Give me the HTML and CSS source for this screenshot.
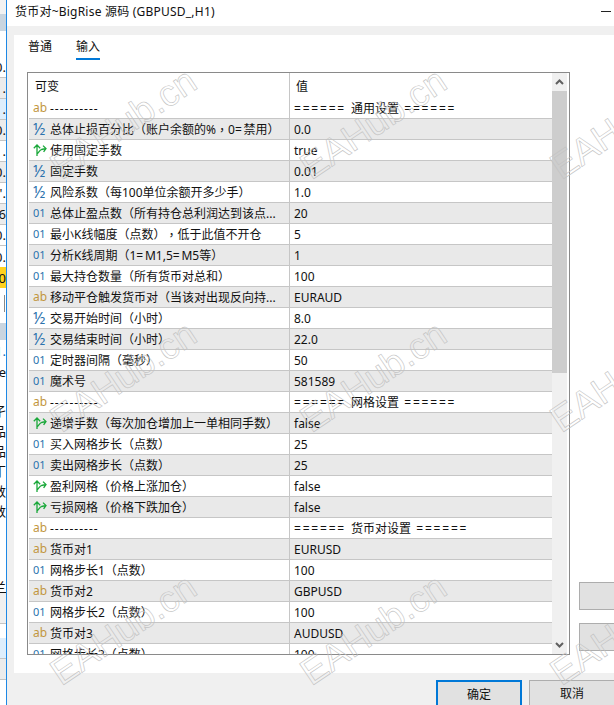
FILE: index.html
```html
<!DOCTYPE html>
<html lang="en">
  <head>
    <meta charset="UTF-8" />
    <title>货币对~BigRise 源码 (GBPUSD_,H1)</title>
    <link rel="stylesheet" href="styles.css">
  </head>
  <body>
    <svg class="icon-defs" width="0" height="0">
      <symbol id="boolIcon" viewBox="0 0 14 12">
        <path d="M4 12V1M.8 4.2 4 1 7.2 4.2M4.5 9.5C6 8 6.8 6 8.5 5.5L13 4.5M10 1.6 13 4.5 10.6 7.8" fill="none" stroke="#1aa83a" stroke-width="1.3" />
      </symbol>
    </svg>

    <div class="window">
      <!-- the window behind the dialog, only its right edge shows -->
      <div class="behind">
        <div class="bh h14 pale"></div>
        <div class="bh h17 steel"></div>
        <div class="bh h26"></div>
        <div class="bh h21 ruled">0.</div>
        <div class="bh h21 grey ruled">.</div>
        <div class="bh h21 sky ruled">.</div>
        <div class="bh h21 grey ruled">0.</div>
        <div class="bh h21 ruled">.</div>
        <div class="bh h21 grey ruled">0.</div>
        <div class="bh h21 ruled">'.</div>
        <div class="bh h21 grey ruled">6</div>
        <div class="bh h21 ruled">0.</div>
        <div class="bh h21">0.</div>
        <div class="bh h21 amber">40</div>
        <div class="bh h7"></div>
        <div class="bh h17"><span class="bh-bar"></span></div>
        <div class="bh h11"></div>
        <div class="bh h17 steel"></div>
        <div class="bh h21 link">1.</div>
        <div class="bh h21">e</div>
        <div class="bh h18"></div>
        <div class="bh h20">孑</div>
        <div class="bh h20">品</div>
        <div class="bh h20">品</div>
        <div class="bh h20">丁</div>
        <div class="bh h20">数</div>
        <div class="bh h20">数</div>
        <div class="bh h61"></div>
        <div class="bh h12 underlined">兰</div>
        <div class="bh h31 shade ruled"></div>
        <div class="bh h14"></div>
        <div class="bh h21 sky ruled"></div>
        <div class="bh h21 grey ruled"></div>
        <div class="bh h25"></div>
      </div>

      <div class="dialog">
        <div class="titlebar">
          <span class="title">货币对~BigRise 源码 (GBPUSD_,H1)</span>
          <span class="minimize"></span>
        </div>

        <div class="dialog-body">
          <div class="page">
            <div class="tabs">
              <span class="tab">普通</span>
              <span class="tab active">输入</span>
            </div>

            <div class="page-main">
              <div class="param-box">
                <div class="param-list">
                  <table class="params">
                    <thead>
                      <tr><th class="col-name">可变</th><th class="col-value">值</th></tr>
                    </thead>
                    <tbody>
                      <tr><td class="col-name"><span class="ico ab">ab</span><span class="dashes">----------</span></td><td class="col-value"><span class="eq">======</span> 通用设置 <span class="eq">======</span></td></tr>
                      <tr><td class="col-name"><span class="ico half">½</span>总体止损百分比（账户余额的%<span class="comma">，</span>0<span class="eq">=</span>禁用）</td><td class="col-value">0.0</td></tr>
                      <tr><td class="col-name"><svg class="ico-svg"><use href="#boolIcon" /></svg>使用固定手数</td><td class="col-value">true</td></tr>
                      <tr><td class="col-name"><span class="ico half">½</span>固定手数</td><td class="col-value">0.01</td></tr>
                      <tr><td class="col-name"><span class="ico half">½</span>风险系数（每100单位余额开多少手）</td><td class="col-value">1.0</td></tr>
                      <tr><td class="col-name"><span class="ico int">01</span>总体止盈点数（所有持仓总利润达到该点...</td><td class="col-value">20</td></tr>
                      <tr><td class="col-name"><span class="ico int">01</span>最小K线幅度（点数）<span class="comma">，</span>低于此值不开仓</td><td class="col-value">5</td></tr>
                      <tr><td class="col-name"><span class="ico int">01</span>分析K线周期（1<span class="eq">=</span>M1,5<span class="eq">=</span>M5等）</td><td class="col-value">1</td></tr>
                      <tr><td class="col-name"><span class="ico int">01</span>最大持仓数量（所有货币对总和）</td><td class="col-value">100</td></tr>
                      <tr><td class="col-name"><span class="ico ab">ab</span>移动平仓触发货币对（当该对出现反向持...</td><td class="col-value">EURAUD</td></tr>
                      <tr><td class="col-name"><span class="ico half">½</span>交易开始时间（小时）</td><td class="col-value">8.0</td></tr>
                      <tr><td class="col-name"><span class="ico half">½</span>交易结束时间（小时）</td><td class="col-value">22.0</td></tr>
                      <tr><td class="col-name"><span class="ico int">01</span>定时器间隔（毫秒）</td><td class="col-value">50</td></tr>
                      <tr><td class="col-name"><span class="ico int">01</span>魔术号</td><td class="col-value">581589</td></tr>
                      <tr><td class="col-name"><span class="ico ab">ab</span><span class="dashes">----------</span></td><td class="col-value"><span class="eq">======</span> 网格设置 <span class="eq">======</span></td></tr>
                      <tr><td class="col-name"><svg class="ico-svg"><use href="#boolIcon" /></svg>递增手数（每次加仓增加上一单相同手数）</td><td class="col-value">false</td></tr>
                      <tr><td class="col-name"><span class="ico int">01</span>买入网格步长（点数）</td><td class="col-value">25</td></tr>
                      <tr><td class="col-name"><span class="ico int">01</span>卖出网格步长（点数）</td><td class="col-value">25</td></tr>
                      <tr><td class="col-name"><svg class="ico-svg"><use href="#boolIcon" /></svg>盈利网格（价格上涨加仓）</td><td class="col-value">false</td></tr>
                      <tr><td class="col-name"><svg class="ico-svg"><use href="#boolIcon" /></svg>亏损网格（价格下跌加仓）</td><td class="col-value">false</td></tr>
                      <tr><td class="col-name"><span class="ico ab">ab</span><span class="dashes">----------</span></td><td class="col-value"><span class="eq">======</span> 货币对设置 <span class="eq">======</span></td></tr>
                      <tr><td class="col-name"><span class="ico ab">ab</span>货币对1</td><td class="col-value">EURUSD</td></tr>
                      <tr><td class="col-name"><span class="ico int">01</span>网格步长1（点数）</td><td class="col-value">100</td></tr>
                      <tr><td class="col-name"><span class="ico ab">ab</span>货币对2</td><td class="col-value">GBPUSD</td></tr>
                      <tr><td class="col-name"><span class="ico int">01</span>网格步长2（点数）</td><td class="col-value">100</td></tr>
                      <tr><td class="col-name"><span class="ico ab">ab</span>货币对3</td><td class="col-value">AUDUSD</td></tr>
                      <tr><td class="col-name"><span class="ico int">01</span>网格步长3（点数）</td><td class="col-value">100</td></tr>
                    </tbody>
                  </table>
                </div>
                <div class="scrollbar">
                  <div class="scroll-btn">
                    <svg width="9" height="6" viewBox="0 0 9 6"><path d="M1 5 4.5 1.5 8 5" fill="none" stroke="#606060" stroke-width="2" /></svg>
                  </div>
                  <div class="scroll-thumb"></div>
                  <div class="scroll-btn scroll-btn-end">
                    <svg width="9" height="6" viewBox="0 0 9 6"><path d="M1 1 4.5 4.5 8 1" fill="none" stroke="#606060" stroke-width="2" /></svg>
                  </div>
                </div>
              </div>

              <div class="side-buttons">
                <div class="side-btn"></div>
                <div class="side-btn"></div>
              </div>
            </div>
          </div>

          <div class="footer">
            <button class="btn btn-default">确定</button>
            <button class="btn btn-cancel">取消</button>
          </div>
        </div>
      </div>
    </div>

    <!-- repeated watermark over the whole picture -->
    <div class="watermarks">
      <div class="watermark-grid">
        <span>EAHub.cn</span><span>EAHub.cn</span><span>EAHub.cn</span>
        <span>EAHub.cn</span><span>EAHub.cn</span><span>EAHub.cn</span>
        <span>EAHub.cn</span><span>EAHub.cn</span><span>EAHub.cn</span>
      </div>
    </div>
  </body>
</html>
```

FILE: styles.css
```css
* {
  box-sizing: border-box;
}

body {
  margin: 0;
  width: 614px;
  height: 705px;
  position: relative;
  overflow: hidden;
  background: white;
  font-family: "Noto Sans", "Noto Sans CJK SC", sans-serif;
  font-size: 12px;
  color: #111;
  text-spacing-trim: space-all;
}

.icon-defs {
  position: absolute;
}

.window {
  display: flex;
  height: 705px;
  overflow: hidden;
}

/* window behind */
.behind {
  width: 6px;
  flex: none;
  overflow: hidden;
  font-size: 13px;
}

.bh {
  display: flex;
  align-items: center;
  justify-content: flex-end;
  white-space: nowrap;
  overflow: hidden;
}

.h7 { height: 7px; }
.h11 { height: 11px; }
.h12 { height: 12px; }
.h14 { height: 14px; }
.h17 { height: 17px; }
.h18 { height: 18px; }
.h20 { height: 20px; }
.h21 { height: 21px; }
.h25 { height: 25px; }
.h26 { height: 26px; }
.h31 { height: 31px; }
.h61 { height: 61px; }

.pale { background: #f2f2f2; }
.steel { background: #c9d5e0; }
.grey { background: #ececec; }
.sky { background: #deeefc; }
.amber { background: #ffd21e; }
.shade { background: #f0f0f0; }
.link { color: #0a6ebd; }
.ruled { border-bottom: 1px solid #c4c4c4; }
.underlined { border-bottom: 1px solid #111; }

.bh-bar {
  width: 1px;
  height: 17px;
  margin-right: 1px;
  background: #888;
}

/* dialog */
.dialog {
  flex: 1;
  min-width: 0;
  display: flex;
  flex-direction: column;
  border-left: 1px solid #1e88e5;
}

.titlebar {
  height: 26px;
  flex: none;
  display: flex;
  align-items: center;
  justify-content: space-between;
  padding: 0 3px 4px 8px;
  background: white;
}

.title {
  letter-spacing: 0.22px;
}

.minimize {
  width: 10px;
  height: 1px;
  background: #222;
}

.dialog-body {
  flex: 1;
  min-height: 0;
  display: flex;
  flex-direction: column;
  background: #f0f0f0;
  padding: 9px 0 0 7px;
}

.page {
  height: 638px;
  flex: none;
  background: white;
  padding-left: 13px;
}

.tabs {
  height: 37px;
  display: flex;
  gap: 24px;
  padding-left: 1px;
}

.tab {
  height: 24px;
  padding-top: 2px;
  line-height: 17px;
  margin-top: 1px;
}

.tab.active {
  border-bottom: 2px solid #0078d7;
}

.page-main {
  display: flex;
  gap: 9px;
}

.param-box {
  width: 543px;
  height: 583px;
  flex: none;
  display: flex;
  padding: 0 2px 0 1px;
  border: 1px solid #8a8a8a;
}

.param-list {
  width: 523px;
  flex: none;
  overflow: hidden;
}

.params {
  width: 523px;
  table-layout: fixed;
  border-collapse: separate;
  border-spacing: 0;
}

.params th {
  height: 25px;
  padding: 0 0 0 6px;
  font-weight: normal;
  text-align: left;
}

.params td {
  height: 21px;
  padding: 0 0 0 4px;
  border-bottom: 1px solid #c6c6c6;
  white-space: nowrap;
  overflow: hidden;
}

.params th.col-name,
.params td.col-name {
  width: 261px;
  border-right: 1px solid #c6c6c6;
}

.params td.col-value {
  word-spacing: 2px;
}

.params tbody tr:nth-child(even) td {
  background: #e9e9e9;
}

.params tbody td.col-name {
  display: flex;
  align-items: center;
}

.ico {
  width: 17px;
  flex: none;
  font-size: 11px;
  line-height: 12px;
}

.ico.ab { color: #c2963f; font-size: 12px; }
.ico.int { color: #2b72ad; }
.ico.half { color: #2b72ad; font-size: 16px; }

.ico-svg {
  width: 14px;
  height: 12px;
  margin-right: 3px;
  flex: none;
}

.dashes {
  letter-spacing: 1px;
}

.eq {
  letter-spacing: 1.8px;
}

/* comma sits in the middle of its box in the original */
.comma {
  font-family: "Noto Sans CJK TC", sans-serif;
}

.scrollbar {
  width: 15px;
  flex: none;
  display: flex;
  flex-direction: column;
  background: #f0f0f0;
}

.scroll-btn {
  height: 18px;
  display: flex;
  align-items: center;
  justify-content: center;
}

.scroll-btn-end {
  margin-top: auto;
}

.scroll-thumb {
  height: 282px;
  background: #cdcdcd;
}

.side-buttons {
  display: flex;
  flex-direction: column;
  gap: 13px;
  padding-top: 510px;
}

.side-btn {
  width: 35px;
  height: 28px;
  background: #e1e1e1;
  border: 1px solid #adadad;
  border-right: none;
}

.footer {
  display: flex;
  gap: 7px;
  padding: 7px 0 0 422px;
}

.btn {
  width: 86px;
  height: 25px;
  flex: none;
  padding: 0;
  background: #e1e1e1;
  border: 1px solid #adadad;
  border-bottom: none;
  font: inherit;
  color: inherit;
}

.btn-default {
  border: 2px solid #0078d7;
  border-bottom: none;
}

.btn-cancel {
  width: 85px;
  border-right: none;
}

/* watermark */
.watermarks {
  position: absolute;
  left: 0;
  top: 0;
  width: 614px;
  height: 705px;
  overflow: hidden;
  pointer-events: none;
}

.watermark-grid {
  width: 750px;
  height: 759px;
  margin: -3px 0 0 -2px;
  display: grid;
  grid-template-columns: repeat(3, 250px);
  grid-template-rows: repeat(3, 253px);
  place-items: center;
}

.watermark-grid span {
  font-family: "Liberation Sans", sans-serif;
  font-size: 37px;
  line-height: 1;
  white-space: nowrap;
  color: transparent;
  -webkit-text-stroke: 0.6px #c2c2c2;
  transform: rotate(-34deg);
}
```
